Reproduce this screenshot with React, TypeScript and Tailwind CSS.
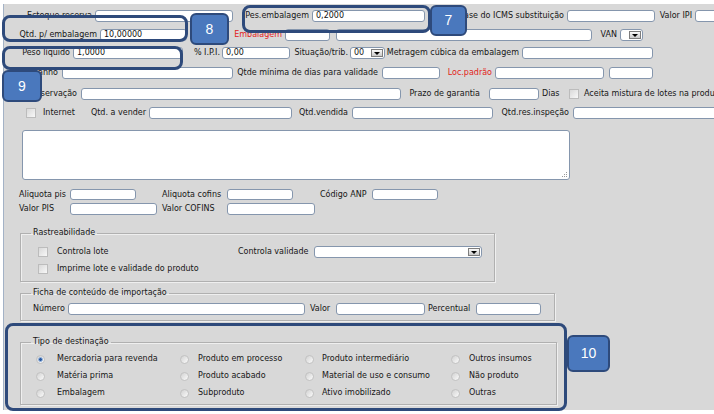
import React from 'react';

const Inp = ({ c = '', v = '' }: { c?: string; v?: string }) => (
  <div className={`shrink-0 bg-white border border-[#8596ad] rounded-[3px] flex items-center pl-[3px] text-[#111] ${c}`}>{v}</div>
);

const Lb = ({ c = '', t, red = false, end = true }: { c?: string; t: string; red?: boolean; end?: boolean }) => (
  <div className={`shrink-0 flex whitespace-nowrap ${end ? 'justify-end' : 'justify-start'} ${red ? 'text-[#e2231a]' : 'text-[#161616]'} ${c}`}>{t}</div>
);

const Sel = ({ c = '', v = '' }: { c?: string; v?: string }) => (
  <div className={`h-[12px] shrink-0 bg-white border border-[#8596ad] rounded-[3px] flex items-center justify-between pl-[3px] pr-[1px] ${c}`}>
    <span>{v}</span>
    <div className="w-[12px] h-[8px] bg-linear-to-b from-[#fafafa] to-[#c9c9c9] border border-[#7d7d7d] flex items-center justify-center">
      <div className="w-0 h-0 border-l-[3px] border-r-[3px] border-t-[3px] border-l-transparent border-r-transparent border-t-black" />
    </div>
  </div>
);

const Cb = ({ c = '' }: { c?: string }) => (
  <div className={`w-[10px] h-[10px] shrink-0 border border-[#bcbcbc] bg-linear-to-br from-[#d9d9d9] to-[#f8f8f8] ${c}`} />
);

const Rd = ({ on = false }: { on?: boolean }) => (
  <div className="w-[9px] h-[9px] rounded-full shrink-0 border border-[#c2c2c2] bg-linear-to-br from-[#d2d2d2] to-[#fbfbfb] flex items-center justify-center">
    {on && <div className="w-[5px] h-[5px] rounded-full bg-[#2a5aa0] border border-[#9ab8e0]" />}
  </div>
);

const Opt = ({ t, on = false, g = 'gap-[9px]' }: { t: string; on?: boolean; g?: string }) => (
  <div className={`flex items-center h-[12px] ${g}`}>
    <Rd on={on} />
    <span className="whitespace-nowrap">{t}</span>
  </div>
);

const Badge = ({ c, t }: { c: string; t: string }) => (
  <div className={`absolute bg-[#4a78bd] border-[2px] border-[#2e4a7b] rounded-[6px] flex items-center justify-center text-white text-[14px] font-['Liberation_Sans',sans-serif] ${c}`}>{t}</div>
);

const Ring = ({ c }: { c: string }) => (
  <div className={`absolute border-[3px] border-[#2e4a7b] rounded-[8px] ${c}`} />
);

export default function App() {
  return (
    <div className="relative w-[714px] h-[414px] bg-white overflow-hidden font-['DejaVu_Sans',sans-serif]">
      <div className="ml-[3px] mt-[4px] w-[711px] h-[406px] bg-[#d8d8d8] border-l border-[#a3b2c6] flex flex-col text-[8px] leading-none text-[#161616]">
        {/* Row 1 */}
        <div className="mt-[6px] h-[12px] flex items-center">
          <Lb c="ml-[6px] w-[82px]" t="Estoque reserva" />
          <Inp c="ml-[3px] w-[138px] h-[12px]" />
          <Lb c="ml-[2px] w-[74px]" t="Pes.embalagem" />
          <Inp c="ml-[3px] w-[113px] h-[12px]" v="0,2000" />
          <Lb c="ml-[2px] w-[137px]" t="Base do ICMS substituição" />
          <Inp c="ml-[3px] w-[88px] h-[12px]" />
          <Lb c="ml-[2px] w-[35px]" t="Valor IPI" />
          <Inp c="ml-[3px] w-[40px] h-[12px]" />
        </div>
        {/* Row 2 */}
        <div className="mt-[7px] h-[12px] flex items-center">
          <Lb c="ml-[6px] w-[87px]" t="Qtd. p/ embalagem" />
          <Inp c="ml-[3px] w-[87px] h-[12px]" v="10,00000" />
          <Lb c="ml-[3px] w-[92px]" t="Embalagem" red />
          <Inp c="ml-[3px] w-[45px] h-[12px]" />
          <Inp c="ml-[6px] w-[256px] h-[12px]" />
          <Lb c="ml-[2px] w-[23px]" t="VAN" />
          <Sel c="ml-[3px] w-[23px]" />
        </div>
        {/* Row 3 */}
        <div className="mt-[6px] h-[12px] flex items-center">
          <Lb c="ml-[6px] w-[60px]" t="Peso líquido" />
          <Inp c="ml-[3px] w-[110px] h-[12px]" v="1,0000" />
          <Lb c="ml-[3px] w-[34px]" t="% I.P.I." />
          <Inp c="ml-[2px] w-[68px] h-[12px]" v="0,00" />
          <Lb c="ml-[2px] w-[56px]" t="Situação/trib." />
          <Sel c="ml-[2px] w-[35px]" v="00" />
          <Lb c="ml-[2px] w-[132px]" t="Metragem cúbica da embalagem" />
          <Inp c="ml-[3px] w-[131px] h-[12px]" />
        </div>
        {/* Row 4 */}
        <div className="mt-[8px] h-[12px] flex items-center">
          <Lb c="ml-[6px] w-[48px]" t="Tamanho" />
          <Inp c="ml-[4px] w-[171px] h-[12px]" />
          <Lb c="ml-[2px] w-[143px]" t="Qtde mínima de dias para validade" />
          <Inp c="ml-[4px] w-[58px] h-[12px]" />
          <Lb c="ml-[2px] w-[50px]" t="Loc.padrão" red />
          <Inp c="ml-[3px] w-[109px] h-[12px]" />
          <Inp c="ml-[5px] w-[44px] h-[12px]" />
        </div>
        {/* Row 5 */}
        <div className="mt-[9px] h-[12px] flex items-center">
          <Lb c="ml-[6px] w-[67px]" t="Observação" />
          <Inp c="ml-[4px] w-[320px] h-[12px]" />
          <Lb c="ml-[2px] w-[77px]" t="Prazo de garantia" />
          <Inp c="ml-[9px] w-[50px] h-[12px]" />
          <Lb c="ml-[3px] w-[19px]" t="Dias" end={false} />
          <Cb c="ml-[8px]" />
          <Lb c="ml-[5px]" t="Aceita mistura de lotes na produção" end={false} />
        </div>
        {/* Row 6 */}
        <div className="mt-[7px] h-[12px] flex items-center">
          <Cb c="ml-[22px]" />
          <Lb c="ml-[7px] w-[33px]" t="Internet" end={false} />
          <Lb c="ml-[4px] w-[66px]" t="Qtd. a vender" />
          <Inp c="ml-[3px] w-[143px] h-[12px]" />
          <Lb c="ml-[2px] w-[54px]" t="Qtd.vendida" />
          <Inp c="ml-[4px] w-[141px] h-[12px]" />
          <Lb c="ml-[2px] w-[74px]" t="Qtd.res.inspeção" />
          <Inp c="ml-[4px] w-[150px] h-[12px]" />
        </div>
        {/* Textarea */}
        <div className="relative mt-[11px] ml-[18px] w-[548px] h-[50px] shrink-0 bg-white border border-[#8596ad] rounded-[3px]">
          <svg className="absolute right-[1px] bottom-[1px]" width="8" height="8" viewBox="0 0 8 8">
            <rect x="6" y="2" width="1" height="1" fill="#9a9a9a" />
            <rect x="4" y="4" width="1" height="1" fill="#9a9a9a" />
            <rect x="6" y="4" width="1" height="1" fill="#9a9a9a" />
            <rect x="2" y="6" width="1" height="1" fill="#9a9a9a" />
            <rect x="4" y="6" width="1" height="1" fill="#9a9a9a" />
            <rect x="6" y="6" width="1" height="1" fill="#9a9a9a" />
          </svg>
        </div>
        {/* Row 8 */}
        <div className="mt-[9px] h-[11px] flex items-center">
          <Lb c="ml-[15px] w-[51px]" t="Aliquota pis" end={false} />
          <Inp c="w-[66px] h-[11px]" />
          <Lb c="ml-[26px] w-[65px]" t="Aliquota cofins" end={false} />
          <Inp c="w-[66px] h-[11px]" />
          <Lb c="ml-[27px] w-[52px]" t="Código ANP" end={false} />
          <Inp c="w-[66px] h-[11px]" />
        </div>
        {/* Row 9 */}
        <div className="mt-[3px] h-[12px] flex items-center">
          <Lb c="ml-[15px] w-[51px]" t="Valor PIS" end={false} />
          <Inp c="w-[87px] h-[12px]" />
          <Lb c="ml-[5px] w-[65px]" t="Valor COFINS" end={false} />
          <Inp c="w-[88px] h-[12px]" />
        </div>
        {/* Rastreabilidade */}
        <fieldset className="mt-[13px] ml-[16px] w-[475px] h-[54px] shrink-0 border border-[#b0b0b0] px-[10px] shadow-[inset_1px_1px_0_#efefef,1px_1px_0_#efefef]">
          <legend className="px-[2px] leading-[10px] text-[8px]">Rastreabilidade</legend>
          <div className="mt-[8px] h-[12px] flex items-center">
            <Cb c="ml-[7px]" />
            <Lb c="ml-[9px] w-[60px]" t="Controla lote" end={false} />
            <Lb c="ml-[121px] w-[75px]" t="Controla validade" end={false} />
            <Sel c="ml-[1px] w-[168px]" />
          </div>
          <div className="mt-[5px] h-[12px] flex items-center">
            <Cb c="ml-[7px]" />
            <Lb c="ml-[9px]" t="Imprime lote e validade do produto" end={false} />
          </div>
        </fieldset>
        {/* Ficha */}
        <fieldset className="mt-[6px] ml-[16px] w-[535px] h-[33px] shrink-0 border border-[#b0b0b0] px-[10px] shadow-[inset_1px_1px_0_#efefef,1px_1px_0_#efefef]">
          <legend className="px-[2px] leading-[10px] text-[8px]">Ficha de conteúdo de importação</legend>
          <div className="mt-[5px] h-[12px] flex items-center">
            <Lb c="ml-[2px] w-[33px]" t="Número" end={false} />
            <Inp c="ml-[2px] w-[237px] h-[12px]" />
            <Lb c="ml-[5px] w-[24px]" t="Valor" end={false} />
            <Inp c="ml-[2px] w-[89px] h-[12px]" />
            <Lb c="ml-[3px] w-[46px]" t="Percentual" end={false} />
            <Inp c="ml-[2px] w-[65px] h-[12px]" />
          </div>
        </fieldset>
        {/* Tipo de destinação */}
        <fieldset className="mt-[16px] ml-[16px] w-[537px] h-[68px] shrink-0 border border-[#b0b0b0] px-[10px] shadow-[inset_1px_1px_0_#efefef,1px_1px_0_#efefef]">
          <legend className="px-[2px] leading-[10px] text-[8px]">Tipo de destinação</legend>
          <div className="mt-[6px] ml-[5px] grid grid-cols-[144px_125px_146px_1fr] gap-y-[5px]">
            <Opt t="Mercadoria para revenda" on g="gap-[12px]" />
            <Opt t="Produto em processo" />
            <Opt t="Produto intermediário" g="gap-[8px]" />
            <Opt t="Outros insumos" />
            <Opt t="Matéria prima" g="gap-[12px]" />
            <Opt t="Produto acabado" />
            <Opt t="Material de uso e consumo" g="gap-[8px]" />
            <Opt t="Não produto" />
            <Opt t="Embalagem" g="gap-[12px]" />
            <Opt t="Subproduto" />
            <Opt t="Ativo imobilizado" g="gap-[8px]" />
            <Opt t="Outras" />
          </div>
        </fieldset>
      </div>

      {/* Annotation overlays */}
      <Ring c="left-[2px] top-[15px] w-[186px] h-[27px]" />
      <Ring c="left-[2px] top-[46px] w-[181px] h-[24px]" />
      <Ring c="left-[242px] top-[5px] w-[189px] h-[28px]" />
      <Ring c="left-[5px] top-[323px] w-[562px] h-[88px]" />
      <Badge c="left-[190px] top-[13px] w-[39px] h-[32px]" t="8" />
      <Badge c="left-[2px] top-[70px] w-[40px] h-[32px]" t="9" />
      <Badge c="left-[430px] top-[5px] w-[37px] h-[31px]" t="7" />
      <Badge c="left-[567px] top-[335px] w-[43px] h-[37px]" t="10" />
    </div>
  );
}
